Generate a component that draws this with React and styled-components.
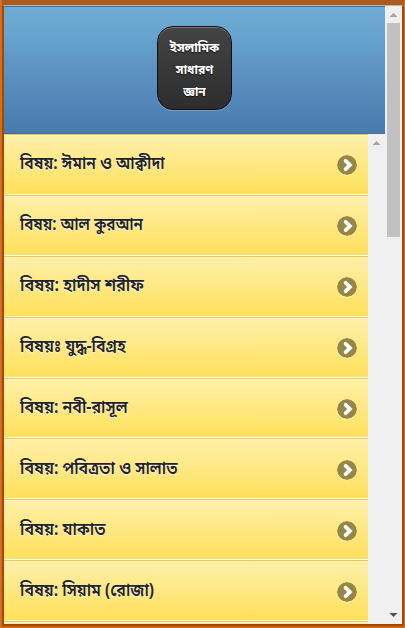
import React from "react";
import styled, { createGlobalStyle } from "styled-components";

const GlobalStyle = createGlobalStyle`
  * {
    box-sizing: border-box;
  }
  body {
    margin: 0;
    overflow: hidden;
    font-family: "Noto Sans Bengali", "Noto Sans", "Open Sans", sans-serif;
  }
`;

const Frame = styled.div`
  height: 628px;
  width: 405px;
  background: #aa5c20;
  border-left: 2px solid #d96d1d;
  border-right: 1px solid #d96d1d;
  border-bottom: 2px solid #d5620f;
  padding-top: 5px;
`;

const Inner = styled.div`
  display: flex;
  height: 621px;
  border: 2px solid #9e4a08;
  border-top: 1px solid #b9b4ae;
  background: #f0f0f0;
`;

const Page = styled.div`
  width: 381px;
  height: 618px;
  display: flex;
  flex-direction: column;
  overflow: hidden;
`;

const Header = styled.header`
  height: 128px;
  flex: none;
  display: flex;
  justify-content: center;
  align-items: flex-start;
  padding-top: 19px;
  border-top: 1px solid #456f9a;
  border-bottom: 1px solid #456f9a;
  background: linear-gradient(#6facd5, #639fcb 32%, #6096c5 42%, #497bae);
`;

const HomeButton = styled.button`
  width: 75px;
  height: 84px;
  padding: 11px 6px 7px;
  border: 1px solid #111;
  border-radius: 16px;
  background: linear-gradient(#444, #2d2d2d);
  box-shadow: inset 0 1px 0 rgba(255, 255, 255, 0.3), 0 1px 0 rgba(255, 255, 255, 0.2);
  color: #fff;
  font: bold 12.5px/22px "Noto Sans Bengali", "Noto Sans", sans-serif;
  text-shadow: 0 1px 1px #111;
  white-space: nowrap;
`;

const Fit = styled.span`
  display: block;
  margin: 0 -10px;
  transform: scaleX(${(p) => p.$fit || 1});
`;

const Body = styled.div`
  display: flex;
  flex: 1;
  min-height: 0;
`;

const List = styled.ul`
  width: 364px;
  margin: 0;
  padding: 0;
  list-style: none;
  overflow: hidden;
`;

const Row = styled.li`
  height: 60.875px;
  display: flex;
  align-items: center;
  justify-content: space-between;
  padding: 0 11px 0 16px;
  border-top: 1px solid #f0c64c;
  border-bottom: 1px solid #fff;
  background: linear-gradient(#fff0aa, #ffe05a);
  box-shadow: inset 0 1px 0 rgba(255, 255, 255, 0.3);
`;

const Label = styled.span`
  margin-top: 2px;
  font-size: 17.5px;
  font-weight: 600;
  line-height: 24px;
  color: #222;
  text-shadow: 0 1px 0 #fff;
  white-space: nowrap;
  transform: scaleX(${(p) => p.$fit});
  transform-origin: left center;
`;

const Arrow = styled.svg`
  flex: none;
  width: 20px;
  height: 20px;
  border-radius: 50%;
  box-shadow: 0 1px 0 rgba(255, 255, 255, 0.4);
  margin-top: 2px;
`;

const Scrollbar = styled.div`
  width: 17px;
  flex: none;
  display: flex;
  flex-direction: column;
  align-items: center;
  background: #f0f0f0;
`;

const Thumb = styled.div`
  width: 13px;
  height: 214px;
  background: #c1c1c1;
  margin-bottom: auto;
`;

const Caret = styled.svg`
  display: block;
  width: 17px;
  height: 17px;
  fill: ${(p) => (p.$dark ? "#505050" : "#a3a3a3")};
`;

const topics = [
  { title: "বিষয়: ঈমান ও আক্বীদা", fit: 0.896 },
  { title: "বিষয়: আল কুরআন", fit: 0.872 },
  { title: "বিষয়: হাদীস শরীফ", fit: 0.93 },
  { title: "বিষয়ঃ যুদ্ধ-বিগ্রহ", fit: 0.915 },
  { title: "বিষয়: নবী-রাসূল", fit: 0.915 },
  { title: "বিষয়: পবিত্রতা ও সালাত", fit: 0.915 },
  { title: "বিষয়: যাকাত", fit: 0.915 },
  { title: "বিষয়: সিয়াম (রোজা)", fit: 0.91 },
  { title: "", fit: 1 },
];

const Topic = ({ title, fit }) => (
  <Row>
    <Label $fit={fit}>{title}</Label>
    <Arrow viewBox="0 0 20 20">
      <circle cx="10" cy="10" r="10" fill="#978746" />
      <path
        d="M8.6 5.8 L12.9 10 L8.6 14.2"
        fill="none"
        stroke="#fff"
        strokeWidth="3.8"
        strokeLinecap="round"
      />
    </Arrow>
  </Row>
);

const UpCaret = () => (
  <Caret viewBox="0 0 17 17">
    <path d="M8.5 7 L12.5 11 H4.5 Z" />
  </Caret>
);

const App = () => (
  <>
    <GlobalStyle />
    <Frame>
      <Inner>
        <Page>
          <Header>
            <HomeButton>
              <Fit>ইসলামিক</Fit>
              <Fit $fit={0.97}>সাধারণ</Fit>
              <Fit $fit={0.95}>জ্ঞান</Fit>
            </HomeButton>
          </Header>
          <Body>
            <List>
              {topics.map((topic, i) => (
                <Topic key={i} {...topic} />
              ))}
            </List>
            <Scrollbar>
              <UpCaret />
            </Scrollbar>
          </Body>
        </Page>
        <Scrollbar>
          <UpCaret />
          <Thumb />
          <Caret viewBox="0 0 17 17" $dark>
            <path d="M4.5 6 H12.5 L8.5 10 Z" />
          </Caret>
        </Scrollbar>
      </Inner>
    </Frame>
  </>
);

export default App;
